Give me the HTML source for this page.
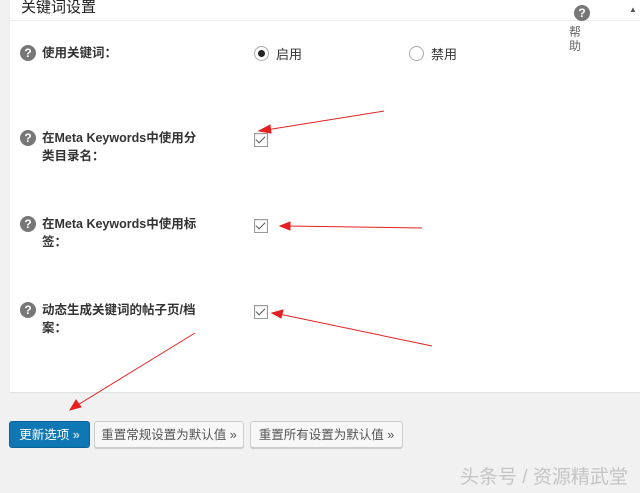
<!DOCTYPE html>
<html><head><meta charset="utf-8"><style>
body{margin:0;width:640px;height:493px;background:#f1f1f1;position:relative;overflow:hidden;font-family:"Liberation Sans","Noto Sans CJK SC",sans-serif;font-size:13px;color:#333}
.a{position:absolute}
.panel{left:10px;top:-2px;width:640px;height:394px;background:#fff;box-shadow:0 1px 1px rgba(0,0,0,.08)}
.q{width:16px;height:16px;border-radius:50%;background:#777;color:#fff;font-weight:bold;font-size:12px;text-align:center;line-height:16px}
.lbl{font-weight:bold;color:#333;font-size:12.5px;line-height:18px}
.cb{width:12px;height:12px;border:1px solid #999;background:#fff;box-shadow:inset 0 1px 2px rgba(0,0,0,.1)}
.cb:after{content:"";position:absolute;left:3px;top:0px;width:4px;height:8px;border:solid #555;border-width:0 1.5px 1.5px 0;transform:rotate(45deg)}
.rd{width:13px;height:13px;border:1px solid #aaa;border-radius:50%;background:#fff}
.btn{top:421px;height:27px;line-height:26px;border-radius:3px;font-size:12.5px;padding:0;text-align:center;box-sizing:border-box;white-space:nowrap}
.g{background:#f7f7f7;border:1px solid #ccc;color:#555;box-shadow:0 1px 0 #ccc}
</style></head><body>
<div class="a panel"></div>
<div class="a" style="left:10px;top:20px;width:630px;height:1px;background:#eee"></div>
<div class="a" style="left:21px;top:-4px;font-size:15px;color:#222">关键词设置</div>
<div class="a q" style="left:574px;top:5px">?</div>
<div class="a" style="left:569px;top:25px;font-size:12px;color:#666;width:14px;line-height:14px">帮助</div>
<div class="a" style="left:629px;top:5px;font-size:8px;color:#555">▲</div>

<div class="a q" style="left:20px;top:45px">?</div>
<div class="a lbl" style="left:42px;top:44px">使用关键词：</div>
<div class="a rd" style="left:254px;top:46px"><div style="position:absolute;left:3px;top:3px;width:7px;height:7px;border-radius:50%;background:#222"></div></div>
<div class="a" style="left:276px;top:44px;font-size:13px">启用</div>
<div class="a rd" style="left:409px;top:46px"></div>
<div class="a" style="left:431px;top:44px;font-size:13px">禁用</div>

<div class="a q" style="left:20px;top:130px">?</div>
<div class="a lbl" style="left:42px;top:129px;width:170px">在Meta Keywords中使用分<br>类目录名：</div>
<div class="a cb" style="left:254px;top:133px"></div>

<div class="a q" style="left:20px;top:216px">?</div>
<div class="a lbl" style="left:42px;top:215px;width:170px">在Meta Keywords中使用标<br>签：</div>
<div class="a cb" style="left:254px;top:219px"></div>

<div class="a q" style="left:20px;top:302px">?</div>
<div class="a lbl" style="left:42px;top:301px;width:170px">动态生成关键词的帖子页/档<br>案：</div>
<div class="a cb" style="left:254px;top:305px"></div>

<div class="a btn" style="left:9px;width:81px;background:#0f78b4;border:1px solid #0a6299;color:#fff">更新选项 »</div>
<div class="a btn g" style="left:94px;width:150px">重置常规设置为默认值 »</div>
<div class="a btn g" style="left:250px;width:153px">重置所有设置为默认值 »</div>

<div class="a" style="left:460px;top:462px;font-size:19px;color:#c4c4c4;white-space:nowrap">头条号 / 资源精武堂</div>

<svg class="a" style="left:0;top:0" width="640" height="493">
<g stroke="#e42020" stroke-width="1" fill="#e42020">
<line x1="384" y1="111" x2="266" y2="130"/><polygon points="259,131 270,125 271,133"/>
<line x1="422" y1="228" x2="287" y2="226"/><polygon points="280,226 290,222 290,230"/>
<line x1="432" y1="346" x2="279" y2="314"/><polygon points="272,313 283,310 281,318"/>
<line x1="195" y1="333" x2="76" y2="406"/><polygon points="70,410 76,400 81,407"/>
</g></svg>
</body></html>
